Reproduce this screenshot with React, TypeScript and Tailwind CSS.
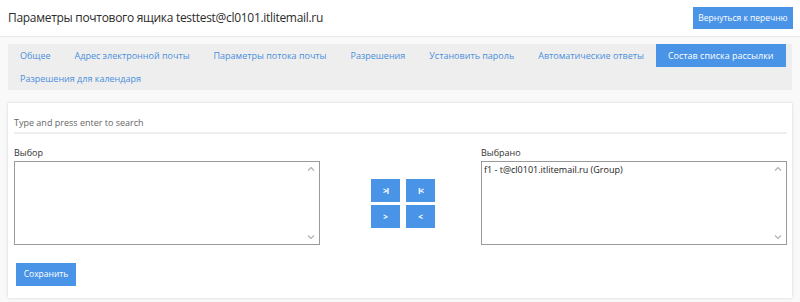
import React from 'react';

const TABS = [
  'Общее',
  'Адрес электронной почты',
  'Параметры потока почты',
  'Разрешения',
  'Установить пароль',
  'Автоматические ответы',
  'Состав списка рассылки',
  'Разрешения для календаря',
];
const ACTIVE = 'Состав списка рассылки';

function ScrollArrows() {
  return (
    <div className="absolute right-[4px] top-[4px] bottom-[4px] flex flex-col justify-between pointer-events-none">
      <svg width="8" height="6" viewBox="0 0 8 6" fill="none" stroke="#b0b0b0" strokeWidth="1.2">
        <path d="M1 4.5 L4 1.5 L7 4.5" />
      </svg>
      <svg width="8" height="6" viewBox="0 0 8 6" fill="none" stroke="#b0b0b0" strokeWidth="1.2">
        <path d="M1 1.5 L4 4.5 L7 1.5" />
      </svg>
    </div>
  );
}

function ListBox({ label, items }: { label: string; items: string[] }) {
  return (
    <div className="w-[306px] flex flex-col">
      <div className="text-[9px] leading-[14px] text-[#333] mb-[1px]">{label}</div>
      <div className="relative h-[84px] border border-[#9a9a9a] bg-white px-[2px] pt-[1px]">
        {items.map((it) => (
          <div key={it} className="text-[9px] leading-[13px] text-[#222]">
            {it}
          </div>
        ))}
        <ScrollArrows />
      </div>
    </div>
  );
}

function MoveButton({ children }: { children: React.ReactNode }) {
  return (
    <button className="w-[29px] h-[23px] bg-[#4a94e8] text-white flex items-center justify-center">
      {children}
    </button>
  );
}

export default function App() {
  return (
    <div className="w-[800px] h-[302px] bg-[#f9f9f9] font-['Open_Sans','Segoe_UI',sans-serif] overflow-hidden">
      <div className="h-[37px] bg-white border-b border-[#e8e8e8] flex items-center justify-between pl-[8px] pr-[7px]">
        <div className="text-[12px] tracking-[-0.3px] text-[#2b2b2b]">
          Параметры почтового ящика testtest@cl0101.itlitemail.ru
        </div>
        <button className="w-[100px] h-[22px] bg-[#4a94e8] text-white text-[8.5px] flex items-center justify-center">
          Вернуться к перечню
        </button>
      </div>

      <div className="mx-[8px] mt-[7px] h-[46px] bg-[#eeeeee] flex flex-wrap content-start">
        {TABS.map((t) => (
          <div
            key={t}
            className={
              t === ACTIVE
                ? 'h-[23px] px-[12px] flex items-center text-[9px] bg-[#4a94e8] text-white'
                : 'h-[23px] px-[12px] flex items-center text-[9px] text-[#4a8fdc]'
            }
          >
            {t}
          </div>
        ))}
      </div>

      <div className="mx-[8px] mt-[13px] h-[195px] bg-white shadow-[0_0_3px_rgba(0,0,0,0.15)] pl-[6px] pr-[5px] pt-[12px]">
        <div className="h-[19px] border-b-2 border-[#eeeeee] text-[9px] leading-[16px] text-[#666]">
          Type and press enter to search
        </div>
        <div className="flex mt-[12px]">
          <ListBox label="Выбор" items={[]} />
          <div className="ml-[51px] mt-[33px] grid grid-cols-2 gap-x-[6px] gap-y-[3px] h-fit">
            <MoveButton>
              <span className="text-[8px] font-bold tracking-[-1px]">&gt;I</span>
            </MoveButton>
            <MoveButton>
              <span className="text-[8px] font-bold tracking-[-1px]">I&lt;</span>
            </MoveButton>
            <MoveButton>
              <span className="text-[8px] font-bold">&gt;</span>
            </MoveButton>
            <MoveButton>
              <span className="text-[8px] font-bold">&lt;</span>
            </MoveButton>
          </div>
          <div className="ml-[46px]">
            <ListBox label="Выбрано" items={['f1 - t@cl0101.itlitemail.ru (Group)']} />
          </div>
        </div>
        <button className="ml-[2px] mt-[18px] w-[60px] h-[23px] bg-[#4a94e8] text-white text-[8.5px] flex items-center justify-center">
          Сохранить
        </button>
      </div>
    </div>
  );
}
